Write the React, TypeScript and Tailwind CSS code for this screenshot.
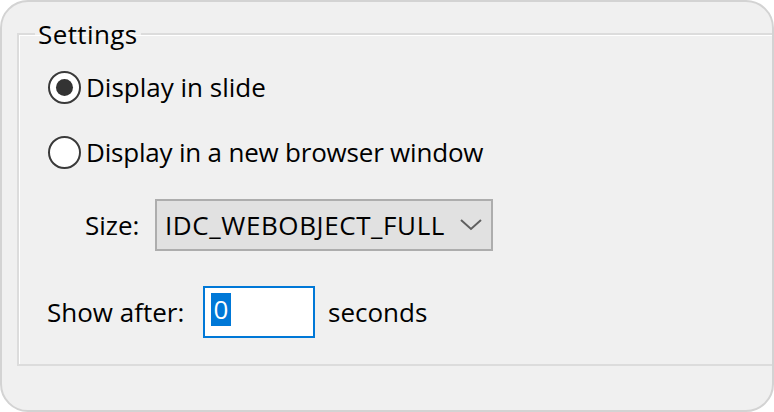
import React from "react";

function Radio({ checked }: { checked?: boolean }) {
  return (
    <div className="w-[33px] h-[33px] rounded-full border-2 border-[#3a3a3a] bg-white flex items-center justify-center shrink-0">
      {checked && <div className="w-[17px] h-[17px] rounded-full bg-[#333333]" />}
    </div>
  );
}

export default function App() {
  return (
    <div className="w-[774px] h-[412px] bg-[#f0f0f0] border-2 border-[#d3d3d3] rounded-[28px] overflow-hidden font-['Open_Sans',sans-serif] text-[26px] text-black">
      <fieldset className="ml-[15px] mt-[14px] w-[790px] h-[350px] m-0 p-0 border-2 border-[#dcdcdc] shadow-[inset_1px_1px_0_#ffffff]">
        <legend className="ml-[16px] px-[3px] leading-[36px] tracking-[0.4px]">Settings</legend>
        <div className="pl-[29px] flex flex-col">
          <div className="mt-[18px] h-[34px] flex items-center gap-[5px]">
            <Radio checked />
            <span className="leading-[34px]">Display in slide</span>
          </div>
          <div className="mt-[31px] h-[34px] flex items-center gap-[5px]">
            <Radio />
            <span className="leading-[34px] tracking-[-0.2px]">Display in a new browser window</span>
          </div>
          <div className="mt-[30px] flex items-center">
            <span className="ml-[37px] w-[70px]">Size:</span>
            <div className="w-[338px] h-[52px] border-2 border-[#adadad] bg-[#e1e1e1] flex items-center">
              <span className="pl-[8px] w-[288px] overflow-hidden whitespace-nowrap tracking-[0.6px]">IDC_WEBOBJECT_FULL</span>
              <svg width="24" height="14" viewBox="0 0 24 14" className="ml-[14px]">
                <path d="M2 2 L12 11 L22 2" fill="none" stroke="#606060" strokeWidth="2" />
              </svg>
            </div>
          </div>
          <div className="mt-[35px] flex items-center">
            <span className="ml-[-1px] w-[156px]">Show after:</span>
            <div className="w-[112px] h-[52px] border-2 border-[#0078d7] bg-white pl-[6px] pt-[5px]">
              <div className="w-[20px] h-[33px] bg-[#0078d7] text-white leading-[33px] text-center">0</div>
            </div>
            <span className="ml-[13px]">seconds</span>
          </div>
        </div>
      </fieldset>
    </div>
  );
}
